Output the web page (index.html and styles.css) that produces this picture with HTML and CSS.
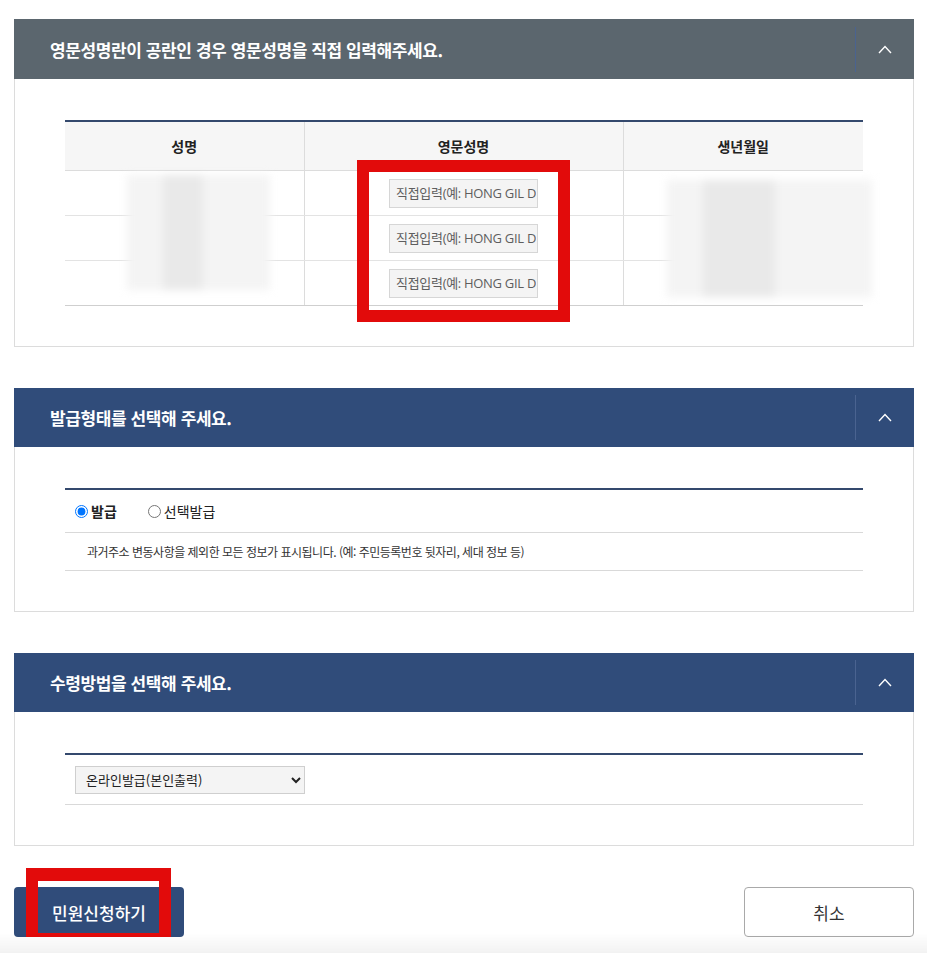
FILE: index.html
```html
<!DOCTYPE html>
<html lang="ko">

<head>
    <meta charset="UTF-8">
    <meta name="viewport" content="width=device-width, initial-scale=1.0">
    <title>민원신청</title>
    <link rel="stylesheet" href="styles.css">
</head>

<body>
    <div class="wrap">

        <!-- 영문성명 입력 -->
        <div class="section">
            <div class="sec-head sec-head-dim">
                <h3 class="sec-title">영문성명란이 공란인 경우 영문성명을 직접 입력해주세요.</h3>
                <button class="toggle" type="button">
                    <svg width="14" height="9" viewBox="0 0 14 9"><polyline points="1,8 7,1.5 13,8" fill="none" stroke="#fff" stroke-width="1.4"/></svg>
                </button>
            </div>
            <div class="sec-body">
                <div class="table-box">
                    <table class="grid">
                        <colgroup>
                            <col style="width: 239px">
                            <col style="width: 319px">
                            <col style="width: 240px">
                        </colgroup>
                        <thead>
                            <tr>
                                <th>성명</th>
                                <th>영문성명</th>
                                <th>생년월일</th>
                            </tr>
                        </thead>
                        <tbody>
                            <tr>
                                <td></td>
                                <td><input class="eng-name" type="text" placeholder="직접입력(예: HONG GIL DONG)"></td>
                                <td></td>
                            </tr>
                            <tr>
                                <td></td>
                                <td><input class="eng-name" type="text" placeholder="직접입력(예: HONG GIL DONG)"></td>
                                <td></td>
                            </tr>
                            <tr>
                                <td></td>
                                <td><input class="eng-name" type="text" placeholder="직접입력(예: HONG GIL DONG)"></td>
                                <td></td>
                            </tr>
                        </tbody>
                    </table>

                    <!-- 개인정보 가림 -->
                    <div class="masked mask-name"><span></span></div>
                    <div class="masked mask-birth"><span></span></div>

                    <div class="mark mark-input"></div>
                </div>
            </div>
        </div>

        <!-- 발급형태 -->
        <div class="section">
            <div class="sec-head">
                <h3 class="sec-title">발급형태를 선택해 주세요.</h3>
                <button class="toggle" type="button">
                    <svg width="14" height="9" viewBox="0 0 14 9"><polyline points="1,8 7,1.5 13,8" fill="none" stroke="#fff" stroke-width="1.4"/></svg>
                </button>
            </div>
            <div class="sec-body">
                <div class="form-box">
                    <div class="form-row radio-row">
                        <label class="radio on"><input type="radio" name="kind" checked>발급</label>
                        <label class="radio"><input type="radio" name="kind">선택발급</label>
                    </div>
                    <div class="form-row desc-row">
                        과거주소 변동사항을 제외한 모든 정보가 표시됩니다. (예: 주민등록번호 뒷자리, 세대 정보 등)
                    </div>
                </div>
            </div>
        </div>

        <!-- 수령방법 -->
        <div class="section">
            <div class="sec-head">
                <h3 class="sec-title">수령방법을 선택해 주세요.</h3>
                <button class="toggle" type="button">
                    <svg width="14" height="9" viewBox="0 0 14 9"><polyline points="1,8 7,1.5 13,8" fill="none" stroke="#fff" stroke-width="1.4"/></svg>
                </button>
            </div>
            <div class="sec-body">
                <div class="form-box">
                    <div class="form-row select-row">
                        <select class="receive">
                            <option>온라인발급(본인출력)</option>
                        </select>
                    </div>
                </div>
            </div>
        </div>

        <div class="btn-area">
            <button class="btn btn-primary" type="button">민원신청하기</button>
            <button class="btn btn-line" type="button">취소</button>
            <div class="mark mark-btn"></div>
        </div>
    </div>

    <div class="bottom-fade"></div>
</body>

</html>
```

FILE: styles.css
```css
body {
    margin: 0;
    background-color: #fff;
    font-family: "Noto Sans CJK KR", "Noto Sans", sans-serif;
    color: #222;
}

.wrap {
    width: 900px;
    margin: 19px 0 0 14px;
}

.section {
    margin-bottom: 41px;
}

/* section header bar */
.sec-head {
    display: flex;
    align-items: center;
    height: 59px;
    background-color: #304c7a;
}

.sec-head-dim {
    height: 60px;
    background-color: #5b666e;
}

.sec-title {
    flex: 1;
    margin: 0;
    padding-left: 36px;
    font-size: 17px;
    font-weight: 700;
    letter-spacing: -0.4px;
    color: #fff;
}

.toggle {
    display: flex;
    justify-content: center;
    align-items: center;
    width: 59px;
    height: 45px;
    padding: 0;
    background: none;
    border: 0;
    border-left: 1px solid #4a6390;
    cursor: pointer;
}

.sec-body {
    padding: 41px 50px 40px;
    border: 1px solid #dcdcdc;
    border-top: 0;
}

/* table */
.table-box {
    position: relative;
}

.grid {
    width: 798px;
    border-collapse: collapse;
    table-layout: fixed;
    border-top: 2px solid #34496d;
}

.grid th {
    height: 48px;
    padding: 0;
    background-color: #f6f6f6;
    border-bottom: 1px solid #dcdcdc;
    border-left: 1px solid #dcdcdc;
    font-size: 14px;
    font-weight: 700;
    color: #222;
}

.grid td {
    height: 44px;
    padding: 0;
    text-align: center;
    border-bottom: 1px solid #e3e3e3;
    border-left: 1px solid #dcdcdc;
}

.grid tr:last-child td {
    border-bottom-color: #cfcfcf;
}

.grid th:first-child,
.grid td:first-child {
    border-left: 0;
}

.eng-name {
    display: block;
    box-sizing: border-box;
    width: 149px;
    height: 29px;
    margin: 0 auto;
    padding: 0 1px 0 6px;
    background-color: #f4f4f4;
    border: 1px solid #d6d6d6;
    font-family: "Open Sans", "Noto Sans CJK KR", sans-serif;
    font-size: 13px;
    letter-spacing: -0.3px;
    color: #333;
}

.eng-name::placeholder {
    color: #5e5e5e;
}

/* blurred personal data */
.masked {
    position: absolute;
    background-color: #f4f4f4;
    filter: blur(4px);
}

.masked span {
    position: absolute;
    top: 0;
    bottom: 0;
    background-color: #e9e9e9;
}

.mask-name {
    left: 62px;
    top: 55px;
    width: 143px;
    height: 115px;
}

.mask-name span {
    left: 36px;
    width: 40px;
}

.mask-birth {
    left: 602px;
    top: 60px;
    width: 205px;
    height: 117px;
}

.mask-birth span {
    left: 36px;
    width: 72px;
}

/* red annotation boxes */
.mark {
    position: absolute;
    box-sizing: border-box;
    border: 12px solid #e20b0b;
}

.mark-input {
    left: 292px;
    top: 40px;
    width: 213px;
    height: 162px;
}

.mark-btn {
    left: 12px;
    top: -19px;
    width: 145px;
    height: 78px;
    border-width: 13px 12px;
}

/* form rows */
.form-box {
    border-top: 2px solid #34496d;
}

.form-row {
    display: flex;
    align-items: center;
    border-bottom: 1px solid #d9d9d9;
}

.radio-row {
    height: 42px;
    padding-left: 10px;
    font-size: 14px;
}

.radio {
    display: flex;
    align-items: center;
    margin-right: 31px;
    color: #222;
}

.radio.on {
    font-weight: 700;
}

.radio input {
    width: 13px;
    height: 13px;
    margin: 0 3px 0 0;
}

.desc-row {
    height: 37px;
    padding-left: 22px;
    font-size: 12px;
    letter-spacing: -0.5px;
    color: #333;
}

.select-row {
    height: 49px;
    padding-left: 10px;
}

.receive {
    width: 230px;
    height: 28px;
    padding: 0 6px;
    background-color: #f4f4f4;
    border: 1px solid #cfcfcf;
    font-family: inherit;
    font-size: 13px;
    color: #222;
}

/* buttons */
.btn-area {
    position: relative;
    display: flex;
    justify-content: space-between;
}

.btn {
    width: 170px;
    height: 50px;
    border-radius: 4px;
    font-family: inherit;
    font-size: 17px;
    letter-spacing: 0;
    cursor: pointer;
}

.btn-primary {
    background-color: #304c7a;
    border: 0;
    color: #fff;
    font-weight: 500;
}

.btn-line {
    background-color: #fff;
    border: 1px solid #a9a9a9;
    color: #333;
}

.bottom-fade {
    position: fixed;
    left: 0;
    right: 0;
    bottom: 0;
    height: 20px;
    background: linear-gradient(rgba(0, 0, 0, 0), rgba(0, 0, 0, 0.05));
}
```
